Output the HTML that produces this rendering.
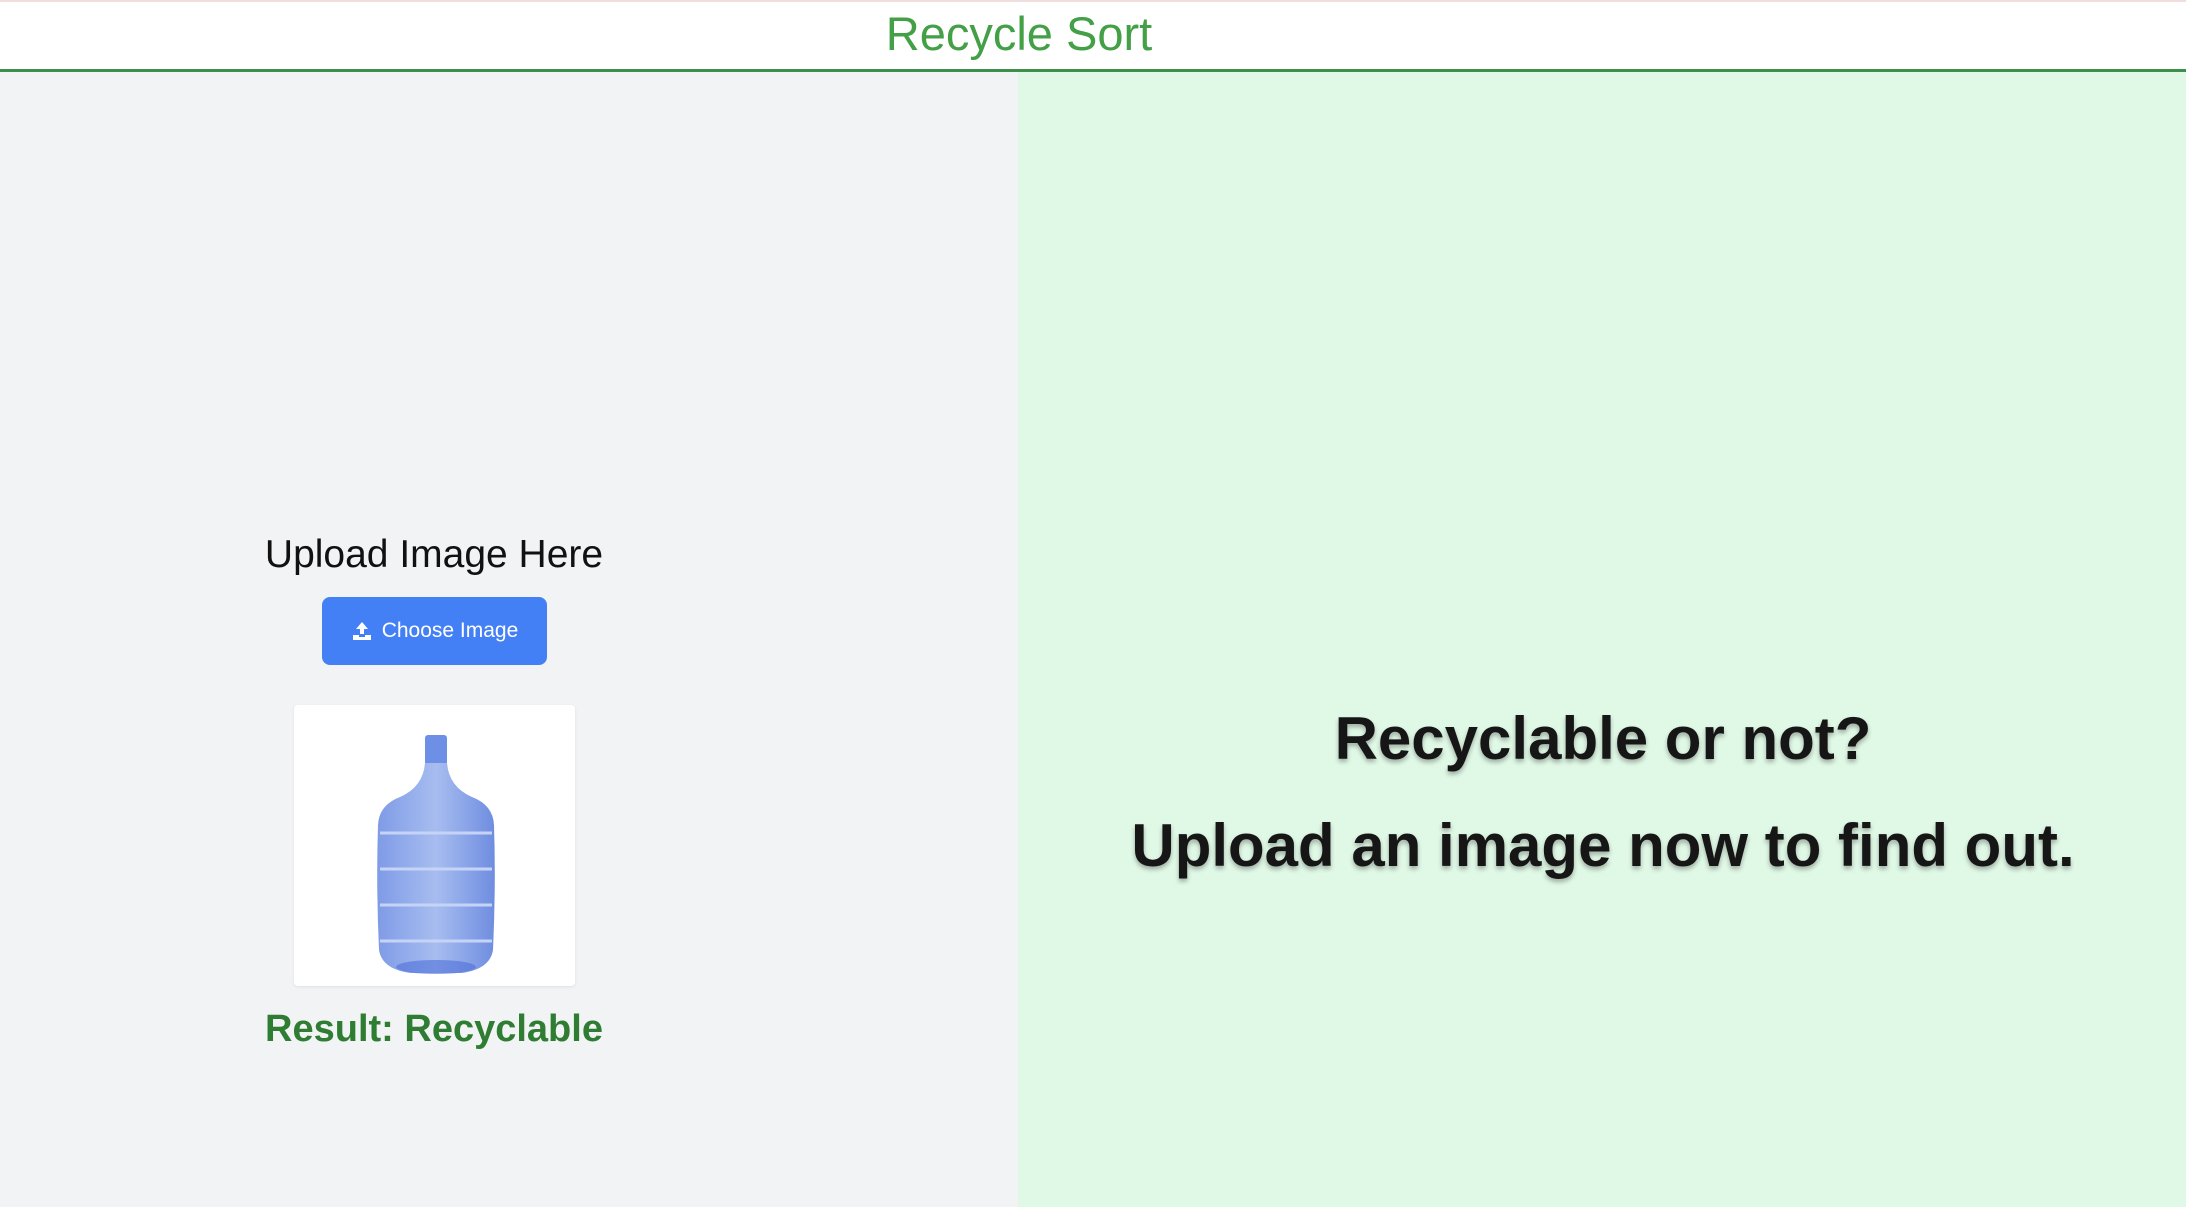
<!DOCTYPE html>
<html><head><meta charset="utf-8"><style>
*{margin:0;padding:0;box-sizing:border-box}
body{width:2186px;height:1207px;overflow:hidden;font-family:"Liberation Sans",sans-serif;background:#f2f3f5;position:relative}
.hdr{position:absolute;left:0;top:0;width:2186px;height:72px;background:#fff;border-top:2px solid #f0dede;border-bottom:3px solid #3e8e4c}
.hdr div{position:absolute;left:0;width:2038px;top:4px;text-align:center;font-size:47px;color:#43a047}
.left{position:absolute;left:0;top:72px;width:1018px;height:1135px;background:#f2f3f5}
.right{position:absolute;left:1018px;top:72px;width:1168px;height:1135px;background:#e0f8e6}
.c{position:absolute;text-align:center;white-space:nowrap}
.btn{position:absolute;left:322px;top:597px;width:225px;height:68px;background:#4480f5;border-radius:8px;color:#fff;font-size:21px;display:flex;align-items:center;justify-content:center;gap:9px}
.box{position:absolute;left:294px;top:705px;width:281px;height:281px;background:#fff;border-radius:4px;box-shadow:0 1px 3px rgba(0,0,0,.08)}
.big{font-weight:bold;font-size:60px;color:#161616;text-shadow:0 3px 5px rgba(0,0,0,.3)}
</style></head><body>
<div class="hdr"><div>Recycle Sort</div></div>
<div class="left"></div>
<div class="right"></div>
<div class="c" style="left:234px;width:400px;top:533px;font-size:39px;color:#111">Upload Image Here</div>
<div class="btn"><svg width="22" height="20" viewBox="0 0 22 20"><path d="M11 1 L5 8 H9 V13 H13 V8 H17 Z" fill="#fff"/><path d="M2 14 H8 V16 H14 V14 H20 V19 H2 Z" fill="#fff"/></svg><span>Choose Image</span></div>
<div class="box">
<svg width="281" height="281" viewBox="0 0 281 281">
<defs><linearGradient id="g" x1="0" x2="1"><stop offset="0" stop-color="#7f9be6"/><stop offset=".5" stop-color="#a7bdf0"/><stop offset="1" stop-color="#6f8de0"/></linearGradient></defs>
<rect x="131" y="30" width="22" height="30" rx="3" fill="#6e8fe6"/>
<path d="M131 58 H153 Q155 82 178 92 Q199 100 200 120 Q202 180 199 245 Q196 264 168 268 H116 Q88 264 85 245 Q82 180 84 120 Q85 100 106 92 Q129 82 131 58Z" fill="url(#g)"/>
<path d="M86 128 H198 M86 164 H198 M86 200 H198 M86 236 H198" stroke="#c5d3f6" stroke-width="3"/>
<ellipse cx="142" cy="262" rx="40" ry="7" fill="#4f6fd8" opacity=".6"/>
</svg>
</div>
<div class="c" style="left:234px;width:400px;top:1008px;font-size:38px;font-weight:bold;color:#2e7d32">Result: Recyclable</div>
<div class="c big" style="left:1003px;width:1200px;top:704px">Recyclable or not?</div>
<div class="c big" style="left:1003px;width:1200px;top:811px">Upload an image now to find out.</div>
</body></html>
